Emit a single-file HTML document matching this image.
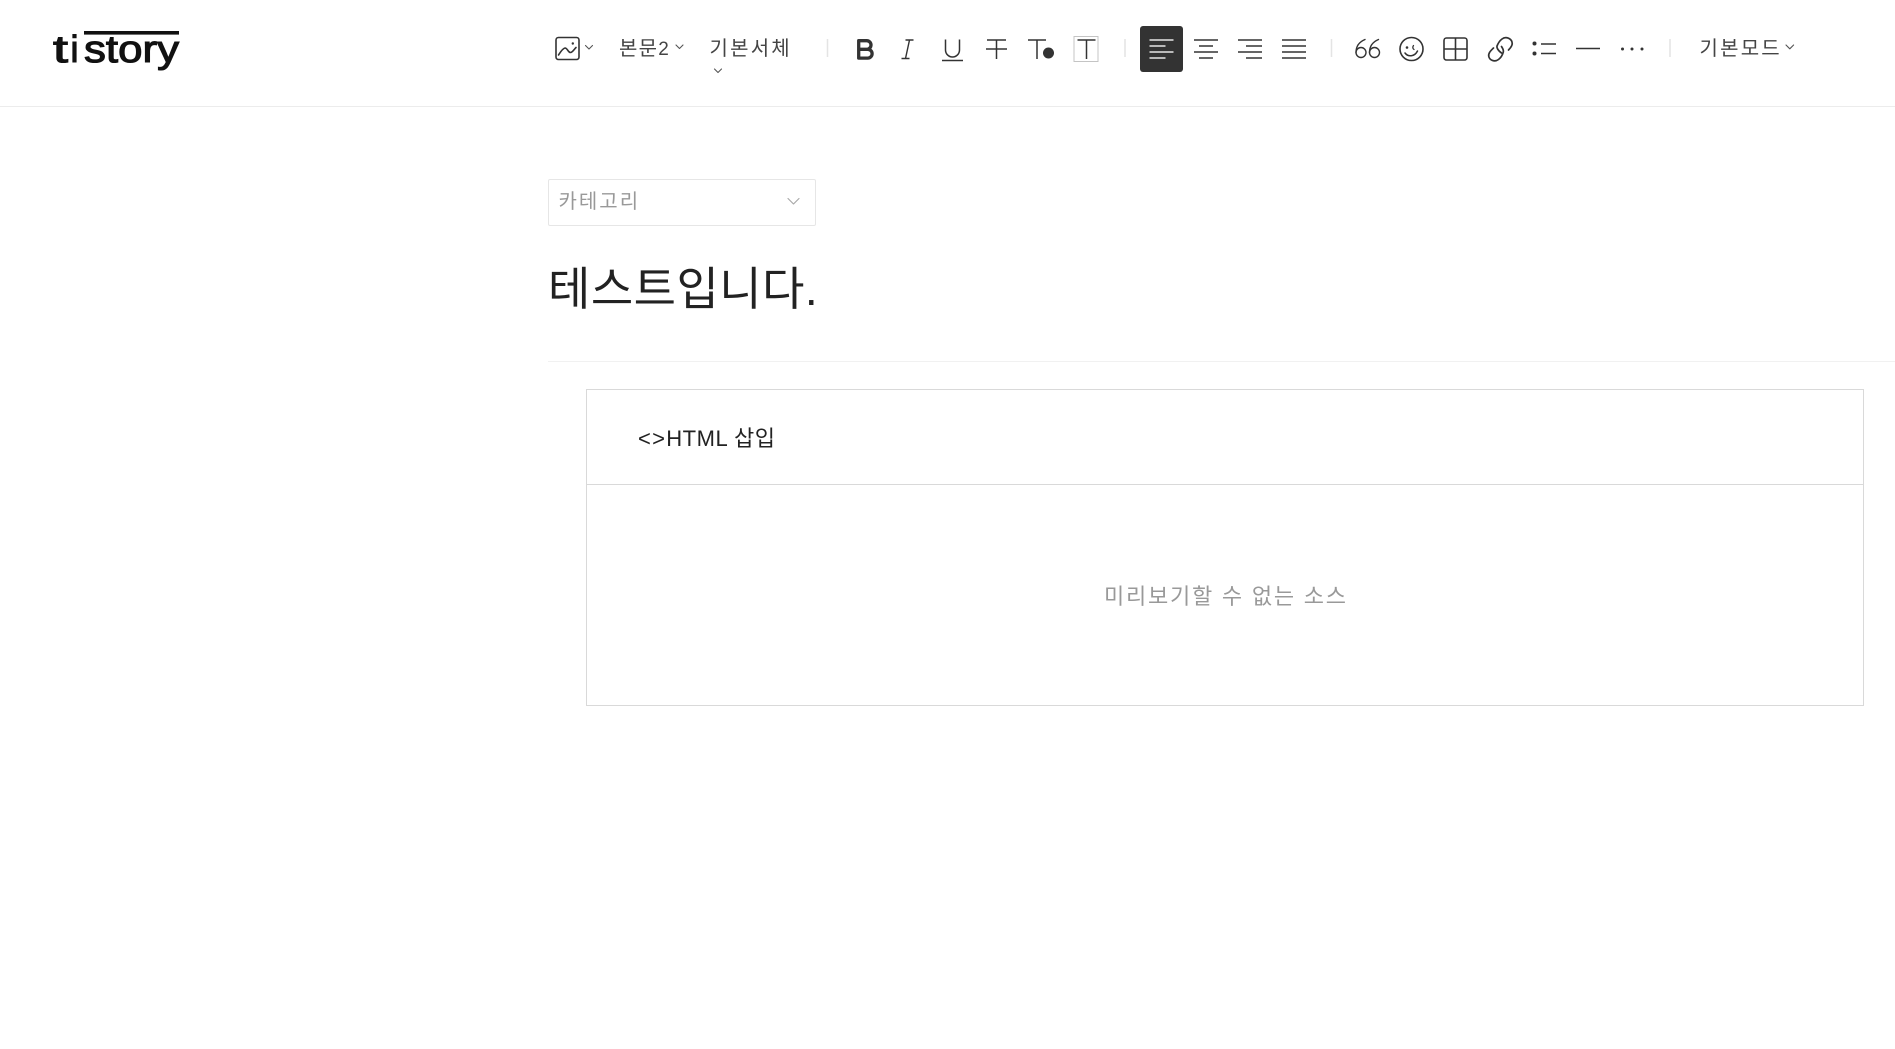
<!DOCTYPE html>
<html lang="ko">
<head>
<meta charset="utf-8">
<title>tistory</title>
<style>
html,body{margin:0;padding:0;background:#fff;width:1895px;height:1049px;overflow:hidden}
body{position:relative;font-family:"Liberation Sans","Noto Sans CJK KR",sans-serif}
.t{position:absolute;white-space:nowrap;line-height:1;font-weight:400}
.box{position:absolute;box-sizing:border-box}
svg{position:absolute;left:0;top:0}
</style>
</head>
<body>
<div class="box" style="left:0;top:106px;width:1895px;height:1px;background:#ececec"></div>
<div class="box" style="left:548px;top:179px;width:268px;height:47px;border:1px solid #e6e6e6;border-radius:2px"></div>
<div class="box" style="left:548px;top:361px;width:1347px;height:1px;background:#f1f1f1"></div>
<div class="box" style="left:586px;top:389px;width:1278px;height:317px;border:1px solid #d9d9d9"></div>
<div class="box" style="left:586px;top:484px;width:1278px;height:1px;background:#d9d9d9"></div>

<div class="t" style="left:619px;top:39px;font-size:20px;color:#444;letter-spacing:1.2px">본문<span style="font-size:19px">2</span></div>
<div class="t" style="left:709.500px;top:39px;font-size:20px;color:#444;letter-spacing:2.200px">기본서체</div>
<div class="t" style="left:1699.500px;top:39px;font-size:20px;color:#444;letter-spacing:2.200px">기본모드</div>
<div class="t" style="left:558.500px;top:192px;font-size:20px;color:#999;letter-spacing:2px">카테고리</div>
<div class="t" style="left:548px;top:265.500px;font-size:46px;color:#222;letter-spacing:.5px">테스트입니다.</div>
<div class="t" style="left:638px;top:428px;font-size:22px;color:#222;letter-spacing:.5px"><span style="letter-spacing:1.300px">&lt;&gt;</span>HTML 삽입</div>
<div class="t" style="left:1104px;top:586px;font-size:22px;color:#999;letter-spacing:1.770px">미리보기할 수 없는 소스</div>

<svg width="1895" height="1049" viewBox="0 0 1895 1049" fill="none">
  <!-- logo -->
  <rect x="84" y="31" width="95" height="3.600" fill="#111"/>
  <g font-family="Liberation Sans, sans-serif" font-size="38" fill="#111" stroke="#111" stroke-width="1.100">
    <text x="53" y="62" textLength="15" lengthAdjust="spacingAndGlyphs">t</text>
    <text x="70.500" y="62" textLength="8" lengthAdjust="spacingAndGlyphs">i</text>
    <text x="84" y="62" textLength="95" lengthAdjust="spacingAndGlyphs">story</text>
  </g>

  <g stroke="#333" stroke-width="1.600" stroke-linecap="round" stroke-linejoin="round">
    <!-- image -->
    <rect x="556" y="37.500" width="23" height="22" rx="2.500"/>
    <path d="M558.500 55c2-3 4-6.500 6.500-7 2.500 0 3 4.500 5.500 4.500 2 0 3.500-3 5.500-5"/>
  </g>
  <circle cx="572.800" cy="43.500" r="1.200" fill="#333"/>

  <!-- chevrons -->
  <g stroke="#555" stroke-width="1.100" stroke-linecap="round" stroke-linejoin="round">
    <path d="M585.500 45.500l3.500 3.500 3.500-3.500"/>
    <path d="M676 45l3.500 3.500 3.500-3.500"/>
    <path d="M714.500 69l3.500 3.500 3.500-3.500"/>
    <path d="M1786 45l3.800 3.800 3.800-3.800"/>
  </g>
  <path d="M788 198.500l5.500 5.500 5.500-5.500" stroke="#aaa" stroke-width="1.200" stroke-linecap="round" stroke-linejoin="round"/>

  <!-- separators -->
  <g stroke="#e4e4e4" stroke-width="1.500">
    <path d="M827.500 39v18M1125 39v18M1331.500 39v18M1670 39v18"/>
  </g>

  <!-- B -->
  <path d="M858.700 40.700h8a4.300 4.300 0 0 1 0 8.600h-8zM858.700 49.300h9a4.400 4.400 0 0 1 0 8.800h-9z" stroke="#333" stroke-width="3.300" stroke-linejoin="round"/>
  <!-- I -->
  <path d="M905.500 40h8M901.500 58.500h8M909.500 40l-4 18.500" stroke="#333" stroke-width="1.400"/>
  <!-- U -->
  <path d="M945.500 39.500V50a7 7 0 0 0 14 0V39.500" stroke="#333" stroke-width="1.500"/>
  <path d="M942 60.500h21" stroke="#333" stroke-width="1.500"/>
  <!-- strike -->
  <path d="M987 40h19M996.500 40v19M986 49h21" stroke="#333" stroke-width="1.500"/>
  <!-- T dot -->
  <path d="M1028 40h18M1037 40v19" stroke="#333" stroke-width="1.500"/>
  <circle cx="1048.500" cy="53" r="5.500" fill="#333"/>
  <!-- T box -->
  <rect x="1074" y="36.500" width="24" height="25" stroke="#c4c4c4" stroke-width="1"/>
  <path d="M1077.500 40h18M1086.500 40v19" stroke="#333" stroke-width="1.500"/>

  <!-- align active -->
  <rect x="1140" y="26" width="43" height="46" rx="3" fill="#333"/>
  <g stroke="#e6e6e6" stroke-width="1.500">
    <path d="M1149.500 40h24M1149.500 46h16M1149.500 52h24M1149.500 58h16"/>
  </g>
  <g stroke="#333" stroke-width="1.500">
    <path d="M1194 40h24M1199 46h14M1194 52h24M1199 58h14"/>
    <path d="M1238 40h24M1246 46h16M1238 52h24M1246 58h16"/>
    <path d="M1282 40h24M1282 46h24M1282 52h24M1282 58h24"/>
  </g>

  <!-- 66 -->
  <g stroke="#333" stroke-width="1.400" stroke-linecap="round">
    <circle cx="1361" cy="52.500" r="5"/>
    <path d="M1356 52.500C1356 46 1359 42 1365 39.500"/>
    <circle cx="1374.500" cy="52.500" r="5"/>
    <path d="M1369.500 52.500C1369.500 46 1372.500 42 1378.500 39.500"/>
  </g>
  <!-- smiley -->
  <circle cx="1411.500" cy="49" r="11.500" stroke="#333" stroke-width="1.600"/>
  <circle cx="1407" cy="47.500" r="1.300" fill="#333"/>
  <path d="M1413.500 45.500c-1 1.500-1 3 .5 4" stroke="#333" stroke-width="1.300" stroke-linecap="round"/>
  <path d="M1405 53c3 4 9.500 4 12.500-2" stroke="#333" stroke-width="1.500" stroke-linecap="round"/>
  <!-- table -->
  <rect x="1444" y="38" width="23" height="22" rx="2.500" stroke="#333" stroke-width="1.600"/>
  <path d="M1455.500 38v22M1444 49h23" stroke="#333" stroke-width="1.600"/>
  <!-- link -->
  <g stroke="#333" stroke-width="1.700" stroke-linecap="round">
    <path d="M1508.500 50C1511 47.500 1513 45 1512 42C1511 38.500 1506 36 1502 39C1500 40.500 1498 43.500 1497 46C1496.500 48 1498.500 51 1501.500 53"/>
    <path d="M1493.500 48C1491 50.500 1488 53 1488.800 56.500C1489.500 60 1494.500 62.500 1498.500 59.500C1500.500 58 1502.500 55 1503.300 52C1503.800 50 1502.500 48 1501.500 46.500"/>
  </g>
  <!-- list -->
  <circle cx="1534.500" cy="43.500" r="2" fill="#333"/>
  <circle cx="1534.500" cy="53.500" r="2" fill="#333"/>
  <path d="M1541 44h15M1541 53.500h15" stroke="#333" stroke-width="1.500"/>
  <!-- hr -->
  <path d="M1576 48.500h24" stroke="#333" stroke-width="1.600"/>
  <!-- dots -->
  <circle cx="1622.500" cy="49" r="1.500" fill="#333"/>
  <circle cx="1632" cy="49" r="1.500" fill="#333"/>
  <circle cx="1642" cy="49" r="1.500" fill="#333"/>
</svg>
</body>
</html>
